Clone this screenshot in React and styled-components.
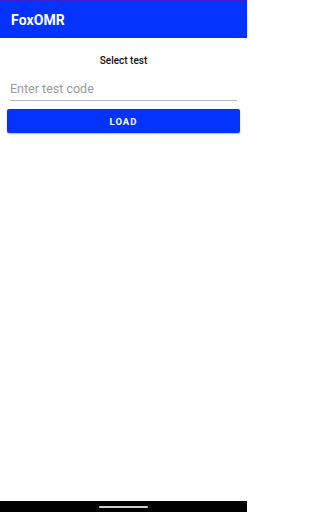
import React from 'react';
import styled, { createGlobalStyle } from 'styled-components';

const GlobalStyle = createGlobalStyle`
  html, body {
    margin: 0;
    padding: 0;
    background: #ffffff;
  }
  body {
    font-family: Roboto, 'Liberation Sans', sans-serif;
  }
`;

const Screen = styled.div`
  display: flex;
  flex-direction: column;
  width: 247px;
  height: 512px;
  background: #ffffff;
`;

const AppBar = styled.header`
  display: flex;
  align-items: center;
  height: 37px;
  padding: 0 11px;
  background: #0433ff;
  border-top: 1px solid #3a1fd0;
`;

const AppTitle = styled.h1`
  margin: 0;
  font-size: 14px;
  font-weight: 700;
  color: #ffffff;
  letter-spacing: 0.1px;
`;

const Content = styled.main`
  flex: 1;
  display: flex;
  flex-direction: column;
  padding: 17px 7px 0;
`;

const Heading = styled.div`
  text-align: center;
  font-size: 10px;
  font-weight: 500;
  color: #111111;
  line-height: 12px;
`;

const Field = styled.input`
  margin: 14px 3px 0;
  padding: 0 0 3px;
  border: none;
  border-bottom: 1px solid #b8b8b8;
  outline: none;
  background: transparent;
  font-family: Roboto, 'Liberation Sans', sans-serif;
  font-size: 12.5px;
  line-height: 16px;
  color: #222222;

  &::placeholder {
    color: #9a9a9a;
  }
`;

const LoadButton = styled.button`
  margin-top: 8px;
  height: 24px;
  border: none;
  border-radius: 2px;
  background: #0433ff;
  color: #ffffff;
  font-family: Roboto, 'Liberation Sans', sans-serif;
  font-size: 9.5px;
  font-weight: 700;
  letter-spacing: 1px;
  box-shadow: 0 1px 2px rgba(0, 0, 0, 0.25);
`;

const NavBar = styled.div`
  display: flex;
  justify-content: center;
  align-items: center;
  height: 11px;
  background: #000000;
`;

const HomeHandle = styled.div`
  width: 49px;
  height: 2px;
  border-radius: 1px;
  background: #d0d0d0;
`;

export default function App() {
  return (
    <>
      <GlobalStyle />
      <Screen>
        <AppBar>
          <AppTitle>FoxOMR</AppTitle>
        </AppBar>
        <Content>
          <Heading>Select test</Heading>
          <Field placeholder="Enter test code" />
          <LoadButton>LOAD</LoadButton>
        </Content>
        <NavBar>
          <HomeHandle />
        </NavBar>
      </Screen>
    </>
  );
}
